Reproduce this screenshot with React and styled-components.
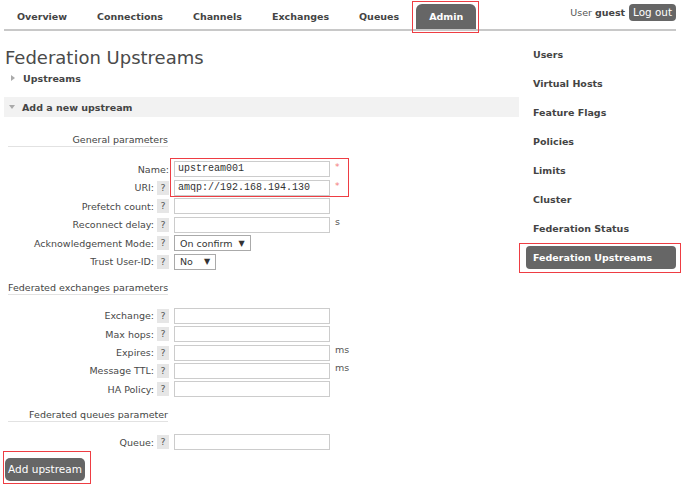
import React from "react";
import styled, { createGlobalStyle } from "styled-components";

const Global = createGlobalStyle`
  body {
    margin: 0;
    background: #fff;
    color: #484848;
    font-family: "DejaVu Sans", Verdana, sans-serif;
    font-size: 9.5px;
  }
`;

const Page = styled.div`
  width: 672px;
  padding: 0 11px 0 4px;
`;

const Header = styled.div`
  display: flex;
  justify-content: space-between;
  height: 29px;
  border-bottom: 2px solid #c8c8c8;
`;

const Menu = styled.ul`
  display: flex;
  gap: 4px;
  margin: 0;
  padding: 0;
  list-style: none;
`;

const MenuItem = styled.li`
  position: relative;
  margin-top: 4px;
  height: 25px;
  line-height: 25px;
  padding: 0 13px;
  font-weight: bold;
  color: ${(p) => (p.$active ? "#fff" : "#444")};
  background: ${(p) => (p.$active ? "#666" : "transparent")};
  border-radius: 6px 6px 0 0;

  ${(p) =>
    p.$marked &&
    `&::after {
      content: "";
      position: absolute;
      inset: -3px -3px -4px -4px;
      border: 1.5px solid #ee3d43;
    }`}
`;

const UserBox = styled.div`
  display: flex;
  align-items: center;
  gap: 4px;
  height: 17px;
  margin-top: 4px;
  color: #555;
  b {
    color: #444;
    margin-left: -1px;
  }
`;

const LogOut = styled.span`
  background: #666;
  color: #fff;
  font-size: 10.4px;
  height: 17px;
  line-height: 17px;
  padding: 0 4px;
  border-radius: 4px;
`;

const Content = styled.div`
  display: flex;
  align-items: flex-start;
`;

const Main = styled.div`
  width: 515px;
`;

const Title = styled.h1`
  margin: 16px 0 0 1px;
  font-size: 18px;
  line-height: 22px;
  font-weight: normal;
  color: #4a4a4a;
`;

const Toggle = styled.div`
  display: flex;
  align-items: center;
  height: ${(p) => (p.$bar ? "20px" : "16px")};
  margin-top: ${(p) => (p.$bar ? "11px" : "1px")};
  padding-left: ${(p) => (p.$bar ? "5px" : "7px")};
  background: ${(p) => (p.$bar ? "#f2f2f2" : "transparent")};
  font-weight: bold;
  color: #444;
`;

const Arrow = styled.span`
  width: 0;
  height: 0;
  margin-right: ${(p) => (p.$open ? "7px" : "8px")};
  border-style: solid;
  border-color: transparent;
  ${(p) =>
    p.$open
      ? `border-width: 4px 3.5px 0 3.5px; border-top-color: #aaa;`
      : `border-width: 3.5px 0 3.5px 4px; border-left-color: #aaa;`}
`;

const Section = styled.div`
  width: 160px;
  margin: ${(p) => p.$top}px 0 0 4px;
  line-height: 13px;
  text-align: right;
  white-space: nowrap;
  border-bottom: 1px solid #e2e2e2;
  color: #444;
`;

const Fields = styled.div`
  display: grid;
  grid-template-columns: 161px 156px 20px;
  grid-auto-rows: 16px;
  column-gap: 5px;
  row-gap: ${(p) => p.$gap}px;
  margin: ${(p) => p.$top}px 0 0 4px;
`;

const Label = styled.div`
  grid-column: 1;
  grid-row: ${(p) => p.$row};
  display: flex;
  align-items: center;
  justify-content: flex-end;
  gap: 3px;
  white-space: nowrap;
`;

const Help = styled.span`
  width: 12px;
  height: 14px;
  line-height: 14px;
  text-align: center;
  background: #e6e6e6;
  color: #555;
`;

const Input = styled.div`
  grid-column: 2;
  grid-row: ${(p) => p.$row};
  box-sizing: border-box;
  height: 16px;
  border: 1px solid #ccc;
  padding-left: 3px;
  font-family: "Liberation Mono", "Courier New", monospace;
  font-size: 10px;
  line-height: 14px;
  color: #333;
  white-space: nowrap;
`;

const Select = styled.div`
  grid-column: 2;
  grid-row: ${(p) => p.$row};
  box-sizing: border-box;
  display: flex;
  align-items: center;
  gap: ${(p) => p.$gap}px;
  justify-self: start;
  height: 16px;
  padding: 0 5px 0 5px;
  border: 1px solid #aaa;
  color: #333;
  font-size: 9.5px;
  white-space: nowrap;
  span {
    font-size: 8px;
  }
`;

const Suffix = styled.div`
  grid-column: 3;
  grid-row: ${(p) => p.$row};
  align-self: start;
  margin-top: ${(p) => (p.$required ? "0" : "-1px")};
  color: ${(p) => (p.$required ? "#f37a7a" : "#555")};
  font-size: ${(p) => (p.$required ? "9px" : "9.5px")};
  line-height: 12px;
`;

const Marked = styled.div`
  grid-row: 1 / 3;
  grid-column: 2 / 4;
  margin: -3px 6px -1px -4px;
  border: 1.5px solid #ee3d43;
  pointer-events: none;
`;

const ButtonWrap = styled.div`
  display: inline-block;
  margin: 1px 0 0 -1px;
  padding: 6px 5px 2px 1px;
  border: 1.5px solid #ee3d43;
`;

const Button = styled.div`
  width: 80px;
  height: 23px;
  line-height: 23px;
  text-align: center;
  border-radius: 5px;
  background: #666;
  color: #fff;
  font-size: 10.5px;
`;

const Side = styled.ul`
  margin: 12px 0 0 7px;
  padding: 0;
  list-style: none;
  width: 150px;
`;

const SideItem = styled.li`
  position: relative;
  height: 23px;
  line-height: 23px;
  margin-bottom: 6px;
  padding-left: 7px;
  border-radius: 4px;
  font-weight: bold;
  color: ${(p) => (p.$active ? "#fff" : "#444")};
  background: ${(p) => (p.$active ? "#666" : "transparent")};

  ${(p) =>
    p.$active &&
    `&::after {
      content: "";
      position: absolute;
      inset: -3px -5px -4px -7px;
      border: 1.5px solid #ee3d43;
    }`}
`;

const menu = ["Overview", "Connections", "Channels", "Exchanges", "Queues", "Admin"];
const side = [
  "Users",
  "Virtual Hosts",
  "Feature Flags",
  "Policies",
  "Limits",
  "Cluster",
  "Federation Status",
  "Federation Upstreams",
];

function Row({ row, label, help = true, value, suffix, select, gap }) {
  return (
    <>
      <Label $row={row}>
        {label}:{help && <Help>?</Help>}
      </Label>
      {select ? (
        <Select $row={row} $gap={gap}>
          {select} <span>▼</span>
        </Select>
      ) : (
        <Input $row={row}>{value}</Input>
      )}
      <Suffix $row={row} $required={suffix === "*"}>
        {suffix}
      </Suffix>
    </>
  );
}

export default function App() {
  return (
    <Page>
      <Global />
      <Header>
        <Menu>
          {menu.map((m) => (
            <MenuItem key={m} $active={m === "Admin"} $marked={m === "Admin"}>
              {m}
            </MenuItem>
          ))}
        </Menu>
        <UserBox>
          User <b>guest</b>
          <LogOut>Log out</LogOut>
        </UserBox>
      </Header>

      <Content>
        <Main>
          <Title>Federation Upstreams</Title>
          <Toggle>
            <Arrow />
            Upstreams
          </Toggle>
          <Toggle $bar>
            <Arrow $open />
            Add a new upstream
          </Toggle>

          <Section $top={16}>General parameters</Section>
          <Fields $top={14} $gap={2.6}>
            <Row row={1} label="Name" help={false} value="upstream001" suffix="*" />
            <Row row={2} label="URI" value="amqp://192.168.194.130" suffix="*" />
            <Marked />
            <Row row={3} label="Prefetch count" />
            <Row row={4} label="Reconnect delay" suffix="s" />
            <Row row={5} label="Acknowledgement Mode" select="On confirm" gap={6} />
            <Row row={6} label="Trust User-ID" select="No" gap={11} />
          </Fields>

          <Section $top={11}>Federated exchanges parameters</Section>
          <Fields $top={13} $gap={2.3}>
            <Row row={1} label="Exchange" />
            <Row row={2} label="Max hops" />
            <Row row={3} label="Expires" suffix="ms" />
            <Row row={4} label="Message TTL" suffix="ms" />
            <Row row={5} label="HA Policy" />
          </Fields>

          <Section $top={11}>Federated queues parameter</Section>
          <Fields $top={12} $gap={2}>
            <Row row={1} label="Queue" />
          </Fields>

          <ButtonWrap>
            <Button>Add upstream</Button>
          </ButtonWrap>
        </Main>

        <Side>
          {side.map((s) => (
            <SideItem key={s} $active={s === "Federation Upstreams"}>
              {s}
            </SideItem>
          ))}
        </Side>
      </Content>
    </Page>
  );
}
